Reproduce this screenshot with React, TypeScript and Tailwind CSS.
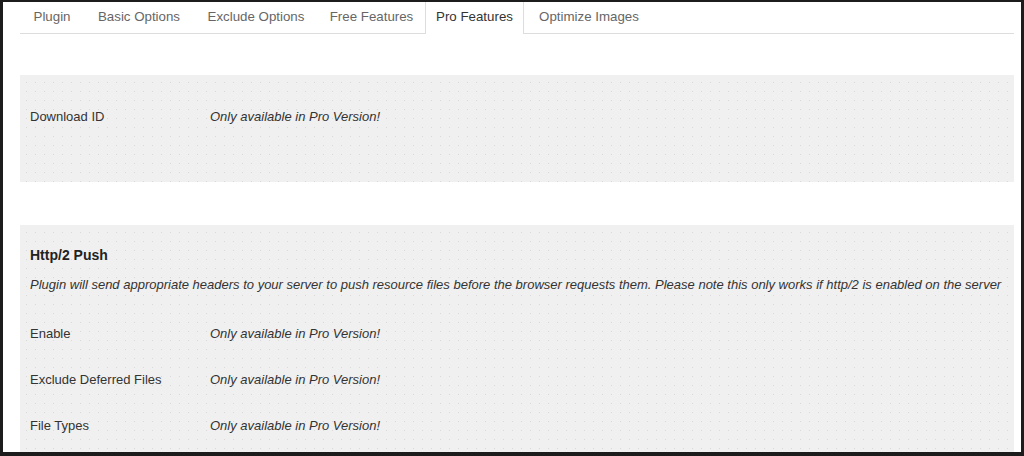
import React from 'react'

const tabs = [
  { label: 'Plugin', w: 'w-[64px]' },
  { label: 'Basic Options', w: 'w-[110px]' },
  { label: 'Exclude Options', w: 'w-[124px]' },
  { label: 'Free Features', w: 'w-[107px]' },
  { label: 'Pro Features', w: 'w-[99px]' },
  { label: 'Optimize Images', w: 'w-[130px]' },
]

const PRO = 'Only available in Pro Version!'

const panelCls =
  'bg-[#f0f0f0] bg-[radial-gradient(circle,#d9d9d9_0.7px,transparent_1px)] bg-[length:9px_9px] bg-[position:2px_3px]'

function Row({ label }: { label: string }) {
  return (
    <div className="flex h-[46px] items-center pt-[2px]">
      <div className="w-[180px] text-[13px] text-[#333]">{label}</div>
      <div className="text-[13px] italic text-[#333]">{PRO}</div>
    </div>
  )
}

export default function App() {
  return (
    <div
      className="h-[456px] w-[1024px] overflow-hidden border-b-[4px] border-l-[3px] border-r-[3px] border-t-[2px] border-[#1c1c1c] bg-white"
      style={{ fontFamily: '"Liberation Sans", Arial, sans-serif' }}
    >
      <div className="ml-[17px] mr-[7px]">
        {/* tabs */}
        <div className="flex h-[32px] border-b border-[#dddddd]">
          {tabs.map((t) => {
            const active = t.label === 'Pro Features'
            return (
              <div
                key={t.label}
                className={
                  active
                    ? `mb-[-1px] flex h-[32px] ${t.w} items-center justify-center border-x border-[#dddddd] bg-white pb-[2px] text-[13.3px] text-[#333]`
                    : `flex h-[31px] ${t.w} items-center justify-center whitespace-nowrap pb-[2px] text-[13.3px] text-[#666]`
                }
              >
                {t.label}
              </div>
            )
          })}
        </div>

        <div className={`mt-[41px] pb-[43px] pl-[10px] pt-[18px] ${panelCls}`}>
          <Row label="Download ID" />
        </div>

        <div className={`mt-[43px] h-[300px] pl-[10px] pt-[20px] ${panelCls}`}>
          <div className="h-[20px] text-[14px] font-bold leading-[20px] text-[#222]">Http/2 Push</div>
          <div className="mt-[10px] h-[20px] text-[13px] italic leading-[20px] text-[#333]">
            Plugin will send appropriate headers to your server to push resource files before the browser requests them. Please note this only works if http/2 is enabled on the server
          </div>
          <div className="mt-[15px]">
            <Row label="Enable" />
            <Row label="Exclude Deferred Files" />
            <Row label="File Types" />
          </div>
        </div>
      </div>
    </div>
  )
}
